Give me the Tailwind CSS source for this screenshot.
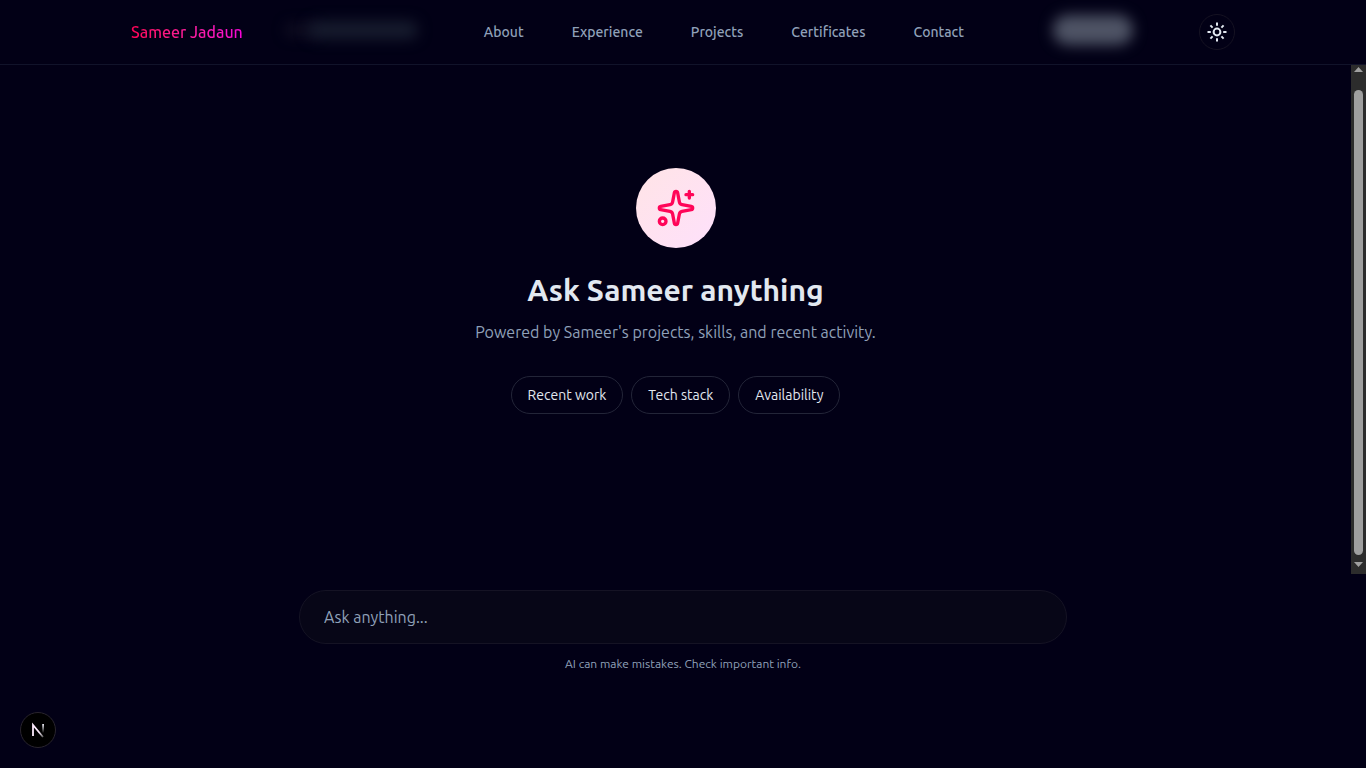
<!DOCTYPE html>
<html lang="en">
<head>
<meta charset="utf-8">
<meta name="viewport" content="width=device-width, initial-scale=1">
<title>Sameer Jadaun</title>
<script src="https://cdn.jsdelivr.net/npm/@tailwindcss/browser@4"></script>
</head>
<body class="flex h-screen flex-col overflow-hidden bg-[#020016] font-['Ubuntu','Noto_Sans',sans-serif] text-slate-200">
  <header class="relative shrink-0 border-b border-[#11132a]">
    <div class="absolute top-[22px] left-[284px] h-4 w-9 rounded-full bg-[#0c0a1e] blur-[6px]"></div>
    <div class="absolute top-[21px] left-[308px] h-[18px] w-[110px] rounded-full bg-[#171c2e] blur-[7px]"></div>
    <div class="absolute top-[15px] left-[1053px] h-[30px] w-20 rounded-full bg-[#4e5365] blur-[7px]"></div>
    <div class="relative mx-auto flex h-16 max-w-6xl items-center justify-between px-6">
      <a href="#" class="bg-linear-to-r from-[#ff0055] to-[#f700d8] bg-clip-text text-base font-medium text-transparent">Sameer Jadaun</a>
      <nav class="flex gap-12 pl-1.5 text-sm font-medium text-slate-400">
        <a href="#about">About</a>
        <a href="#experience">Experience</a>
        <a href="#projects">Projects</a>
        <a href="#certificates">Certificates</a>
        <a href="#contact">Contact</a>
      </nav>
      <button type="button" aria-label="Toggle theme" class="flex size-9 items-center justify-center rounded-full border border-[#151222]">
        <svg class="size-5" viewBox="0 0 20 20" fill="none" stroke="#e2e8f0" stroke-width="2"><circle cx="10" cy="10" r="3.4"/><path d="M10 .5v3.3M10 16.2v3.3M.5 10h3.3M16.2 10h3.3M3.4 3.4l2.2 2.2M14.4 14.4l2.2 2.2M3.4 16.6l2.2-2.2M14.4 5.6l2.2-2.2"/></svg>
      </button>
    </div>
  </header>
  <main class="flex min-h-0 flex-1 flex-col">
    <div class="flex min-h-0 flex-1">
      <section class="flex flex-1 flex-col items-center pt-[103px] text-center">
        <div class="flex size-20 items-center justify-center rounded-full bg-linear-to-br from-[#ffe4e6] to-[#fee0fb]">
          <svg class="size-10" viewBox="0 0 24 24" fill="none" stroke="#ff0558" stroke-width="2" stroke-linecap="round" stroke-linejoin="round"><path d="M11.017 2.814a1 1 0 0 1 1.966 0l1.051 5.558a2 2 0 0 0 1.594 1.594l5.558 1.051a1 1 0 0 1 0 1.966l-5.558 1.051a2 2 0 0 0-1.594 1.594l-1.051 5.558a1 1 0 0 1-1.966 0l-1.051-5.558a2 2 0 0 0-1.594-1.594l-5.558-1.051a1 1 0 0 1 0-1.966l5.558-1.051a2 2 0 0 0 1.594-1.594z"/><path d="M20 2v4M22 4h-4"/><circle cx="4" cy="20" r="2"/></svg>
        </div>
        <h1 class="mt-6 text-3xl leading-9 font-semibold">Ask Sameer anything</h1>
        <p class="mt-3 text-base leading-6 text-slate-400">Powered by Sameer's projects, skills, and recent activity.</p>
        <div class="mt-8 flex gap-2 text-sm">
          <button type="button" class="rounded-full border border-[#232538] px-4 py-2">Recent work</button>
          <button type="button" class="rounded-full border border-[#232538] px-4 py-2">Tech stack</button>
          <button type="button" class="rounded-full border border-[#232538] px-4 py-2">Availability</button>
        </div>
      </section>
      <div aria-hidden="true" class="flex w-[15px] flex-col items-center bg-[#2c2c2c]">
        <svg class="my-0.5 h-[5px] w-[9px] shrink-0" viewBox="0 0 9 5"><path d="M0 5 4.5 0 9 5z" fill="#a0a0a0"/></svg>
        <div class="mt-4 mb-[7px] w-[9px] flex-1 rounded-full bg-[#9f9f9f]"></div>
        <svg class="mb-[7px] h-[5px] w-[9px] shrink-0" viewBox="0 0 9 5"><path d="M0 0h9L4.500 5z" fill="#a0a0a0"/></svg>
      </div>
    </div>
    <form class="mx-auto w-full max-w-3xl pt-4 pb-24 text-center">
      <input type="text" aria-label="Ask anything" placeholder="Ask anything..." class="block h-[54px] w-full rounded-full border border-[#151324] bg-[#070617] px-6 text-base placeholder:text-slate-400">
      <p class="mt-3 text-xs leading-4 text-slate-400">AI can make mistakes. Check important info.</p>
    </form>
  </main>
  <button type="button" aria-label="Open Next.js Dev Tools" class="fixed bottom-5 left-5 flex size-9 items-center justify-center rounded-full border border-[#29242e] bg-black">
    <svg class="size-9 shrink-0" viewBox="0 0 36 36" fill="none" stroke-width="1.8"><defs><linearGradient id="d" x1="13" y1="12" x2="24" y2="25" gradientUnits="userSpaceOnUse"><stop offset=".6" stop-color="#fbe9fb"/><stop offset="1" stop-color="#fff" stop-opacity=".3"/></linearGradient><linearGradient id="v" x1="0" y1="12" x2="0" y2="21" gradientUnits="userSpaceOnUse"><stop stop-color="#e9e9f4"/><stop offset="1" stop-color="#fff" stop-opacity="0"/></linearGradient></defs><path d="M13 24V13L23 25" stroke="url(#d)"/><path d="M22.200 12h1.800v9h-1.800z" fill="url(#v)"/></svg>
  </button>
</body>
</html>
